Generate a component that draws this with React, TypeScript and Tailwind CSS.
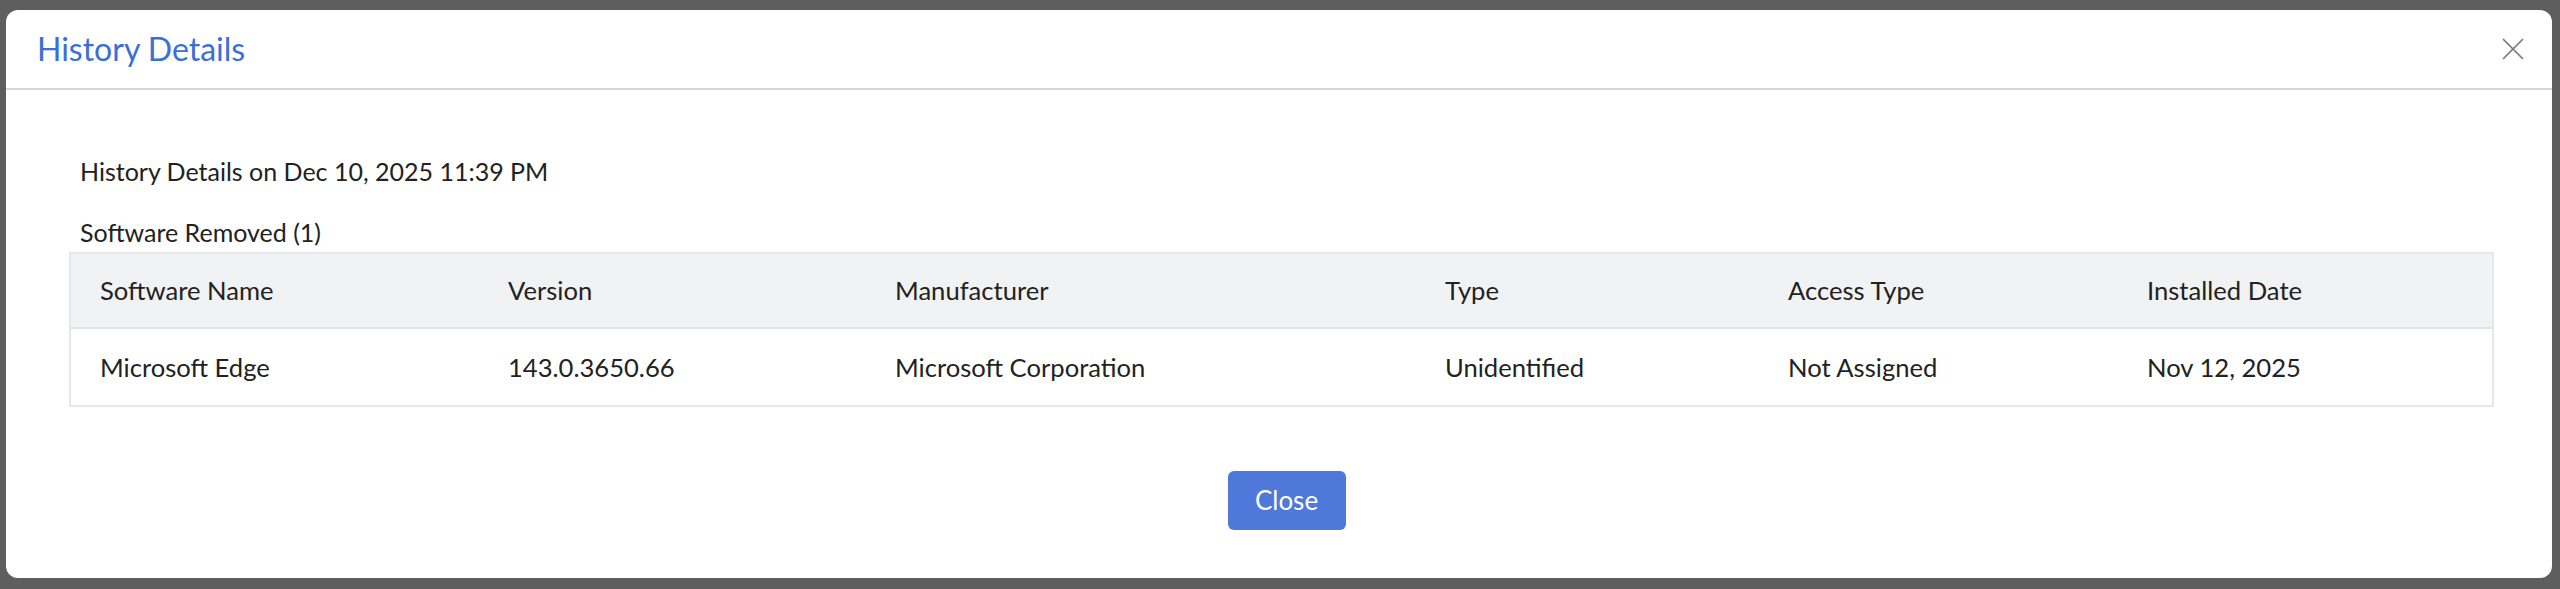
import { X } from "lucide-react";

const columns = ["Software Name", "Version", "Manufacturer", "Type", "Access Type", "Installed Date"];

const rows = [
  ["Microsoft Edge", "143.0.3650.66", "Microsoft Corporation", "Unidentified", "Not Assigned", "Nov 12, 2025"],
];

const gridCols = "grid grid-cols-[408px_387px_550px_343px_359px_1fr]";

export default function App() {
  return (
    <div className="h-[589px] w-[2560px] overflow-hidden bg-[#5e5e5e] font-['Lato','Liberation_Sans',sans-serif]">
      {/* Modal */}
      <div className="ml-[6px] mt-[10px] flex h-[568px] w-[2546px] flex-col rounded-[12px] bg-white">
        <div className="flex h-[80px] items-center justify-between border-b-2 border-[#d6d7da] pl-[31px] pr-[20px]">
          <h2 className="text-[32px] leading-none text-[#3a6fd9]">History Details</h2>
          <button className="text-[#7a7a7a]">
            <X className="h-[38px] w-[38px]" strokeWidth={1.1} />
          </button>
        </div>

        <div className="flex flex-1 flex-col pl-[63px] pr-[58px] pt-[65px] text-[#222]">
          <p className="ml-[11px] text-[25px] leading-[32px]">History Details on Dec 10, 2025 11:39 PM</p>
          <p className="ml-[11px] mt-[29px] text-[25px] leading-[32px]">Software Removed (1)</p>

          <div className="mt-[4px] border-2 border-[#e6e7e9] text-[25.6px]">
            <div className={`${gridCols} h-[75px] items-center border-b-2 border-[#e2e3e5] bg-[#f1f2f4]`}>
              {columns.map((c) => (
                <div key={c} className="pl-[29px]">{c}</div>
              ))}
            </div>
            {rows.map((r) => (
              <div key={r[0]} className={`${gridCols} h-[76px] items-center`}>
                {r.map((v, i) => (
                  <div key={i} className="pl-[29px]">{v}</div>
                ))}
              </div>
            ))}
          </div>

          <div className="mt-[64px] flex justify-center">
            <button className="ml-[10px] h-[59px] w-[118px] rounded-[6px] bg-[#4e78da] text-[26px] text-white">
              Close
            </button>
          </div>
        </div>
      </div>
    </div>
  );
}
